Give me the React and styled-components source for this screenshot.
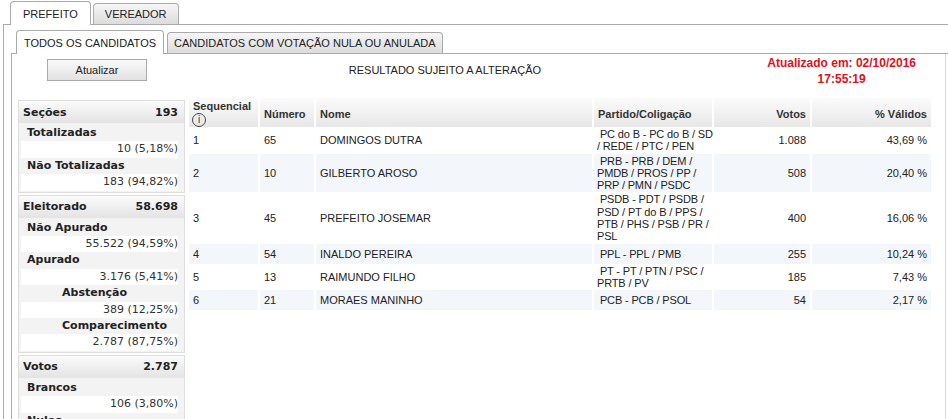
import React from "react";
import styled, { createGlobalStyle } from "styled-components";

const GlobalStyle = createGlobalStyle`
  * { box-sizing: border-box; }
  html, body { margin: 0; padding: 0; background: #fff; overflow: hidden; }
  body {
    font-family: "Liberation Sans", Arial, sans-serif;
    font-size: 11px;
    color: #222;
  }
  #root { height: 419px; overflow: hidden; }
`;

const Page = styled.div`
  padding-top: 1px;
`;

const TabBar = styled.div`
  display: flex;
  align-items: flex-end;
  gap: ${p => p.$gap}px;
  padding-left: ${p => p.$indent}px;
  height: 23px;
  position: relative;
  z-index: 1;
`;

const Tab = styled.div`
  height: ${p => (p.$active ? 24 : 21)}px;
  margin-bottom: ${p => (p.$active ? -1 : 0)}px;
  padding: 0 ${p => p.$pad}px;
  display: flex;
  align-items: center;
  border: 1px solid #aaa;
  border-bottom: none;
  border-radius: 4px 4px 0 0;
  background: ${p =>
    p.$active ? "#fff" : "linear-gradient(#f6f6f6, #dcdcdc)"};
  color: #222;
  font-size: 11px;
  white-space: nowrap;
`;

const OuterPanel = styled.div`
  margin-left: 3px;
  border-top: 1px solid #aaa;
  border-left: 1px solid #aaa;
  padding: 5px 0 0 7px;
`;

const InnerPanel = styled.div`
  display: flex;
  border-top: 1px solid #aaa;
  border-left: 1px solid #aaa;
  height: 380px;
`;

const Content = styled.div`
  flex: 1;
  padding: 5px 12px 0 6px;
`;

const ScrollTrack = styled.div`
  width: 5px;
  border-left: 1px solid #d8d8d8;
  display: flex;
  flex-direction: column;
`;

const ScrollThumb = styled.div`
  height: 246px;
  margin-left: 2px;
  border-left: 1px solid #9a9a9a;
`;

const TopRow = styled.div`
  display: grid;
  grid-template-columns: 159px 1fr 220px;
  height: 39px;
  align-items: start;
`;

const Button = styled.button`
  margin-left: 29px;
  width: 100px;
  height: 22px;
  border: 1px solid #aaa;
  background: linear-gradient(#fafafa, #e2e2e2);
  font-family: "Liberation Sans", Arial, sans-serif;
  font-size: 11px;
  color: #222;
  padding: 0;
`;

const Notice = styled.div`
  margin-top: 5px;
  line-height: 13px;
  text-align: center;
  color: #222;
`;

const Updated = styled.div`
  text-align: right;
  padding-right: 17px;
  margin-top: -4px;
`;

const UpdatedText = styled.div`
  display: inline-block;
  text-align: center;
  color: #e0101a;
  font-weight: bold;
  font-size: 12px;
  line-height: 16px;
`;

const Main = styled.div`
  display: flex;
  gap: 2px;
  align-items: flex-start;
`;

const Stats = styled.div`
  width: 167px;
  margin-top: 2px;
  font-family: "DejaVu Sans", Verdana, sans-serif;
  font-size: 11px;
`;

const StatBlock = styled.div`
  border: 1px solid #dedede;
  background: #f3f3f3;
  margin-bottom: 2px;
  padding-bottom: 1px;
`;

const StatHead = styled.div`
  height: 22px;
  display: flex;
  justify-content: space-between;
  align-items: center;
  padding: 0 6px 0 4px;
  background: linear-gradient(#fbfbfb, #e3e3e3);
  font-weight: bold;
  color: #222;
`;

const StatBody = styled.div`
  padding-top: 2px;
`;

const StatLabel = styled.div`
  line-height: 16.4px;
  padding-left: ${p => p.$indent}px;
  font-weight: bold;
  color: #222;
`;

const StatValue = styled.div`
  line-height: 16.4px;
  margin: 0 6px 0 2px;
  text-align: right;
  background: #fff;
  color: #333;
`;

const Table = styled.table`
  width: 746px;
  table-layout: fixed;
  border-collapse: separate;
  border-spacing: 2px 0;
  font-size: 11px;
`;

const Th = styled.th`
  height: 29px;
  padding: 0 4px 6px;
  vertical-align: bottom;
  text-align: ${p => (p.$right ? "right" : "left")};
  font-weight: bold;
  color: #333;
  line-height: 13px;
  background: linear-gradient(#fbfbfb, #e7e7e7);
  white-space: nowrap;
`;

const SeqTh = styled(Th)`
  padding-bottom: 0;
  line-height: 12px;
`;

const InfoIcon = styled.span`
  display: flex;
  align-items: center;
  justify-content: center;
  width: 14px;
  height: 14px;
  margin: 1px 0 0 -1px;
  border: 1px solid #444;
  border-radius: 50%;
  font-size: 10px;
  font-weight: normal;
  line-height: 1;
  color: #333;
`;

const Tr = styled.tr`
  height: 20px;
  background: ${p => (p.$striped ? "#f3f6fb" : "#fff")};
`;

const Td = styled.td`
  padding: 1px 4px;
  vertical-align: middle;
  line-height: 12.3px;
  text-align: ${p => (p.$right ? "right" : "left")};
  color: #222;
`;

const PartyTd = styled(Td)`
  padding: 1px 0 1px 3px;
  overflow: visible;
`;

const PartyLine = styled.div`
  white-space: nowrap;
  letter-spacing: -0.15px;
`;

const stats = [
  {
    title: "Seções",
    total: "193",
    items: [
      { label: "Totalizadas", value: "10 (5,18%)", indent: 8 },
      { label: "Não Totalizadas", value: "183 (94,82%)", indent: 8 },
    ],
  },
  {
    title: "Eleitorado",
    total: "58.698",
    items: [
      { label: "Não Apurado", value: "55.522 (94,59%)", indent: 8 },
      { label: "Apurado", value: "3.176 (5,41%)", indent: 8 },
      { label: "Abstenção", value: "389 (12,25%)", indent: 43 },
      { label: "Comparecimento", value: "2.787 (87,75%)", indent: 43 },
    ],
  },
  {
    title: "Votos",
    total: "2.787",
    items: [
      { label: "Brancos", value: "106 (3,80%)", indent: 8 },
      { label: "Nulos", value: "0 (0,00%)", indent: 8 },
    ],
  },
];

const candidates = [
  { seq: 1, num: "65", name: "DOMINGOS DUTRA", party: ["\u00a0PC do B - PC do B / SD", "/ REDE / PTC / PEN"], votes: "1.088", pct: "43,69 %" },
  { seq: 2, num: "10", name: "GILBERTO AROSO", party: ["\u00a0PRB - PRB / DEM /", "PMDB / PROS / PP /", "PRP / PMN / PSDC"], votes: "508", pct: "20,40 %" },
  { seq: 3, num: "45", name: "PREFEITO JOSEMAR", party: ["\u00a0PSDB - PDT / PSDB /", "PSD / PT do B / PPS /", "PTB / PHS / PSB / PR /", "PSL"], votes: "400", pct: "16,06 %" },
  { seq: 4, num: "54", name: "INALDO PEREIRA", party: ["\u00a0PPL - PPL / PMB"], votes: "255", pct: "10,24 %" },
  { seq: 5, num: "13", name: "RAIMUNDO FILHO", party: ["\u00a0PT - PT / PTN / PSC /", "PRTB / PV"], votes: "185", pct: "7,43 %" },
  { seq: 6, num: "21", name: "MORAES MANINHO", party: ["\u00a0PCB - PCB / PSOL"], votes: "54", pct: "2,17 %" },
];

export default function App() {
  return (
    <Page>
      <GlobalStyle />
      <TabBar $indent={10} $gap={2}>
        <Tab $active $pad={12}>PREFEITO</Tab>
        <Tab $pad={11}>VEREADOR</Tab>
      </TabBar>
      <OuterPanel>
        <TabBar $indent={5} $gap={3}>
          <Tab $active $pad={7}>TODOS OS CANDIDATOS</Tab>
          <Tab $pad={6}>CANDIDATOS COM VOTAÇÃO NULA OU ANULADA</Tab>
        </TabBar>
        <InnerPanel>
          <Content>
            <TopRow>
              <div>
                <Button>Atualizar</Button>
              </div>
              <Notice>RESULTADO SUJEITO A ALTERAÇÃO</Notice>
              <Updated>
                <UpdatedText>
                  Atualizado em: 02/10/2016
                  <br />
                  17:55:19
                </UpdatedText>
              </Updated>
            </TopRow>
            <Main>
              <Stats>
                {stats.map(block => (
                  <StatBlock key={block.title}>
                    <StatHead>
                      <span>{block.title}</span>
                      <span>{block.total}</span>
                    </StatHead>
                    <StatBody>
                      {block.items.map(item => (
                        <React.Fragment key={item.label}>
                          <StatLabel $indent={item.indent}>{item.label}</StatLabel>
                          <StatValue>{item.value}</StatValue>
                        </React.Fragment>
                      ))}
                    </StatBody>
                  </StatBlock>
                ))}
              </Stats>
              <Table>
                <colgroup>
                  <col style={{ width: 69 }} />
                  <col style={{ width: 54 }} />
                  <col style={{ width: 276 }} />
                  <col style={{ width: 118 }} />
                  <col style={{ width: 96 }} />
                  <col style={{ width: 119 }} />
                </colgroup>
                <thead>
                  <tr>
                    <SeqTh>
                      Sequencial
                      <InfoIcon>i</InfoIcon>
                    </SeqTh>
                    <Th>Número</Th>
                    <Th>Nome</Th>
                    <Th>Partido/Coligação</Th>
                    <Th $right>Votos</Th>
                    <Th $right>% Válidos</Th>
                  </tr>
                </thead>
                <tbody>
                  {candidates.map((c, index) => (
                    <Tr key={c.seq} $striped={index % 2 === 1}>
                      <Td>{c.seq}</Td>
                      <Td>{c.num}</Td>
                      <Td>{c.name}</Td>
                      <PartyTd>
                        {c.party.map((line, i) => (
                          <PartyLine key={i}>{line}</PartyLine>
                        ))}
                      </PartyTd>
                      <Td $right>{c.votes}</Td>
                      <Td $right>{c.pct}</Td>
                    </Tr>
                  ))}
                </tbody>
              </Table>
            </Main>
          </Content>
          <ScrollTrack>
            <ScrollThumb />
          </ScrollTrack>
        </InnerPanel>
      </OuterPanel>
    </Page>
  );
}
